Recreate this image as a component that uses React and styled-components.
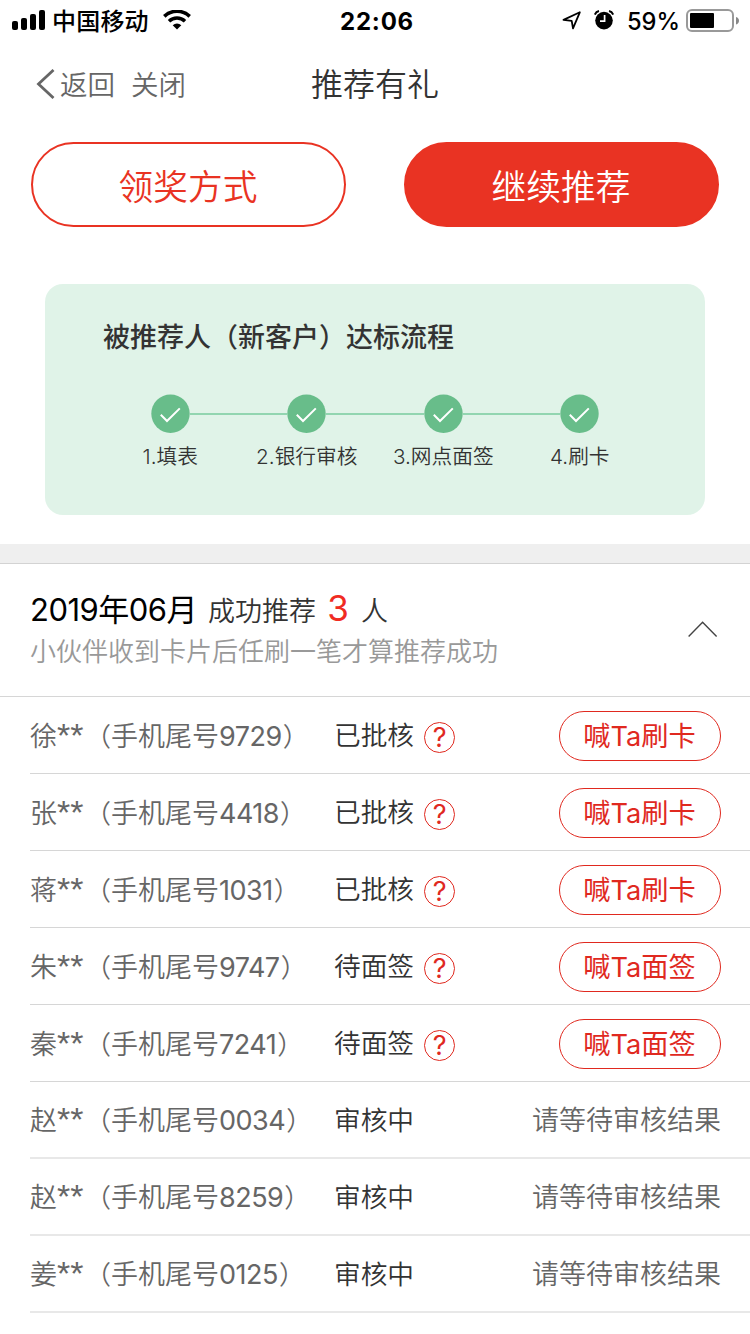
import React from "react";
import styled, { createGlobalStyle } from "styled-components";

const GlobalStyle = createGlobalStyle`
  * {
    box-sizing: border-box;
  }
  body {
    margin: 0;
    background: #fff;
    font-family: Inter, "Noto Sans CJK SC", sans-serif;
    color: #333;
  }
  button {
    font-family: inherit;
    padding: 0;
    cursor: pointer;
  }
  svg {
    display: block;
    flex: none;
  }
`;
const Page = styled.div`
  width: 750px;
  height: 1334px;
  overflow: hidden;
  background: #fff;
`;
const StatusBar = styled.div`
  height: 40px;
  display: grid;
  grid-template-columns: 1fr auto 1fr;
  align-items: center;
  padding: 0 11px 0 12px;
  color: #000;
`;
const StatusSide = styled.div`
  display: flex;
  align-items: center;
  justify-content: ${(props) => (props.$end ? "flex-end" : "flex-start")};
`;
const Carrier = styled.span`
  margin: 0 14px 0 6px;
  padding-top: 3px;
  font-size: 24px;
  line-height: 37px;
  font-weight: 500;
  letter-spacing: 0.2px;
`;
const Clock = styled.span`
  padding: 3px 0 0 3px;
  font-size: 24px;
  line-height: 37px;
  font-weight: 700;
  letter-spacing: 0.8px;
`;
const Percent = styled.span`
  margin: 0 6px 0 13px;
  padding-top: 3px;
  font-size: 23.7px;
  line-height: 37px;
  font-weight: 500;
`;
const Nav = styled.div`
  height: 88px;
  display: grid;
  grid-template-columns: 1fr auto 1fr;
  align-items: center;
  padding: 0 36px;
`;
const NavLinks = styled.div`
  display: flex;
  align-items: center;
  font-size: 27.5px;
  font-weight: 350;
  color: #666;
`;
const NavLink = styled.span`
  margin-left: ${(props) => props.$gap}px;
  padding-bottom: 2px;
`;
const Title = styled.div`
  padding-bottom: 5px;
  font-size: 32px;
  font-weight: 350;
`;
const Actions = styled.div`
  display: flex;
  justify-content: space-between;
  padding: 14px 31px 0;
`;
const ActionButton = styled.button`
  width: 315px;
  height: 85px;
  padding: 1px 1px 0 0;
  border: 2px solid #e93323;
  border-radius: 43px;
  background: ${(props) => (props.$filled ? "#e93323" : "#fff")};
  color: ${(props) => (props.$filled ? "#fff" : "#e93323")};
  font-size: 34.7px;
  font-weight: 350;
`;
const Card = styled.div`
  margin: 57px 45px 29px;
  height: 231px;
  padding: 34px 58px 0;
  border-radius: 18px;
  background: #e0f3e8;
`;
const CardTitle = styled.div`
  font-size: 27px;
  line-height: 40px;
  font-weight: 500;
  white-space: nowrap;
`;
const Steps = styled.div`
  display: flex;
  width: 546px;
  margin: 36px 0 0 -1px;
`;
const Step = styled.div`
  flex: 1;
  display: flex;
  flex-direction: column;
  align-items: center;
  font-size: 20.7px;
  line-height: 30px;
  font-weight: 350;
`;
const StepTrack = styled.div`
  width: 100%;
  display: flex;
  align-items: center;
  margin-bottom: 9px;
`;
const StepLine = styled.span`
  flex: 1;
  height: 2px;
  background: ${(props) => (props.$hidden ? "transparent" : "#92d5b0")};
`;
const Separator = styled.div`
  height: 20px;
  background: #efefef;
  border-bottom: 1px solid #d3d3d3;
`;
const MonthHeader = styled.div`
  height: 133px;
  display: flex;
  justify-content: space-between;
  padding: 23px 32px 0 30px;
  border-bottom: 1px solid #d6d6d6;
`;
const Summary = styled.div`
  height: 44px;
  display: flex;
  align-items: baseline;
  line-height: 42px;
  font-size: 27px;
  font-weight: 350;
`;
const Month = styled.span`
  width: 178px;
  color: #000;
  font-size: 31px;
  font-weight: 370;
  letter-spacing: -0.5px;
`;
const Count = styled.span`
  width: 45px;
  padding-right: 1px;
  text-align: center;
  color: #f02b22;
  font-size: 35px;
  font-weight: 400;
`;
const Hint = styled.div`
  font-size: 26px;
  line-height: 42px;
  font-weight: 350;
  color: #999;
`;
const Toggle = styled.div`
  padding-top: 34px;
`;
const Row = styled.div`
  height: 77px;
  margin-left: 30px;
  padding-right: 29px;
  display: flex;
  align-items: center;
  border-bottom: ${(props) =>
    props.$pending ? "2px solid #e8e8e8" : "1px solid #d6d6d6"};
  font-size: 27px;
  line-height: 40px;
  white-space: nowrap;
`;
const Person = styled.div`
  width: 304px;
  padding-top: ${(props) => (props.$pending ? 2 : 3)}px;
  display: flex;
  font-weight: 350;
  color: #666;
`;
const Name = styled.span`
  width: 54px;
  height: 40px;
  display: flex;
`;
const Stars = styled.span`
  margin-top: -2px;
  font-family: "Liberation Sans", sans-serif;
  font-size: 34px;
`;
const Bracket = styled.span`
  width: 27px;
  padding-left: ${(props) => (props.$close ? 1 : 0)}px;
  font-size: 26px;
  text-align: ${(props) => (props.$close ? "left" : "right")};
`;
const Digits = styled.span`
  font-weight: 370;
  letter-spacing: -0.5px;
`;
const Status = styled.span`
  font-weight: 350;
  font-size: 26.7px;
`;
const Help = styled.span`
  width: 31px;
  height: 31px;
  margin: 5px 0 0 10px;
  display: flex;
  align-items: center;
  justify-content: center;
  border: 1.5px solid #e0291f;
  border-radius: 50%;
  color: #e0291f;
  font-size: 27px;
  font-weight: 370;
  line-height: 28px;
`;
const CallButton = styled.button`
  width: 162px;
  height: 50px;
  margin: 1px 0 0 auto;
  padding: 2px 1px 0 0;
  border: 1px solid #e0291f;
  border-radius: 25px;
  background: #fff;
  color: #e0291f;
  font-size: 27.2px;
  line-height: 40px;
  font-weight: 370;
`;
const Waiting = styled.span`
  margin-left: auto;
  padding-top: 2px;
  font-weight: 350;
  color: #666;
`;

const steps = ["1.填表", "2.银行审核", "3.网点面签", "4.刷卡"];

const people = [
  { name: "徐", tail: "9729", status: "已批核", action: "喊Ta刷卡" },
  { name: "张", tail: "4418", status: "已批核", action: "喊Ta刷卡" },
  { name: "蒋", tail: "1031", status: "已批核", action: "喊Ta刷卡" },
  { name: "朱", tail: "9747", status: "待面签", action: "喊Ta面签" },
  { name: "秦", tail: "7241", status: "待面签", action: "喊Ta面签" },
  { name: "赵", tail: "0034", status: "审核中" },
  { name: "赵", tail: "8259", status: "审核中" },
  { name: "姜", tail: "0125", status: "审核中" },
];

const SignalIcon = () => (
  <svg width="34" height="20" viewBox="0 0 34 20">
    <rect x="0" y="11" width="6" height="9" rx="2" />
    <rect x="9" y="8" width="6" height="12" rx="2" />
    <rect x="18" y="4" width="6" height="16" rx="2" />
    <rect x="27" y="0" width="6" height="20" rx="2" />
  </svg>
);
const WifiIcon = () => (
  <svg width="28" height="20" viewBox="0 0 28 20" fill="none" stroke="#000">
    <path d="M1.3 6.4a18.3 18.3 0 0 1 25.4 0" strokeWidth="3.6" />
    <path d="M6 11.3a11.6 11.6 0 0 1 16 0" strokeWidth="3.5" />
    <path
      d="M9.7 15.3a6.3 6.3 0 0 1 8.6 0L14 19.6z"
      fill="#000"
      stroke="none"
    />
  </svg>
);
const LocationIcon = () => (
  <svg width="20" height="20" viewBox="0 0 20 20">
    <path
      d="M1.5 9.9L17.8 2.3L11 18.3L9.7 10.9Z"
      fill="none"
      stroke="#000"
      strokeWidth="1.8"
      strokeLinejoin="round"
    />
  </svg>
);
const AlarmIcon = () => (
  <svg
    width="20"
    height="20"
    viewBox="0 0 20 20"
    style={{ marginLeft: 12 }}
  >
    <circle cx="10" cy="10.6" r="8.8" />
    <path
      d="M.8 4.6Q2 1.6 5 1M19.2 4.6Q18 1.6 15 1"
      fill="none"
      stroke="#000"
      strokeWidth="2"
    />
    <path d="M10.6 5v6.2H6" fill="none" stroke="#fff" strokeWidth="1.7" />
  </svg>
);
const BatteryIcon = () => (
  <svg width="53" height="24" viewBox="0 0 53 24">
    <rect
      x="1"
      y="2"
      width="46"
      height="21"
      rx="5"
      fill="none"
      stroke="#999"
      strokeWidth="2"
    />
    <rect x="4" y="5" width="24" height="15" rx="1" />
    <path d="M50 9q3 1 3 3.8T50 16.5z" fill="#888" />
  </svg>
);
const BackIcon = () => (
  <svg width="19" height="30" viewBox="0 0 19 30">
    <path d="M17.5 1L2.5 15L17.5 29" fill="none" stroke="#666" strokeWidth="2.8" />
  </svg>
);
const CheckIcon = () => (
  <svg width="39" height="39" viewBox="0 0 39 39">
    <circle cx="19.5" cy="19.7" r="19.2" fill="#68bd8a" />
    <path
      d="M9.8 20.8L16 27L28.8 14.4"
      fill="none"
      stroke="#fff"
      strokeWidth="2"
    />
  </svg>
);
const ChevronIcon = () => (
  <svg width="30" height="17" viewBox="0 0 30 17">
    <path d="M.6 15.5L14.6 1.3L28.6 15.5" fill="none" stroke="#444" strokeWidth="1.4" />
  </svg>
);

const App = () => {
  return (
    <>
      <GlobalStyle />
      <Page>
        <StatusBar>
          <StatusSide>
            <SignalIcon />
            <Carrier>中国移动</Carrier>
            <WifiIcon />
          </StatusSide>
          <Clock>22:06</Clock>
          <StatusSide $end>
            <LocationIcon />
            <AlarmIcon />
            <Percent>59%</Percent>
            <BatteryIcon />
          </StatusSide>
        </StatusBar>
        <Nav>
          <NavLinks>
            <BackIcon />
            <NavLink $gap={5}>返回</NavLink>
            <NavLink $gap={16}>关闭</NavLink>
          </NavLinks>
          <Title>推荐有礼</Title>
        </Nav>
        <Actions>
          <ActionButton>领奖方式</ActionButton>
          <ActionButton $filled>继续推荐</ActionButton>
        </Actions>
        <Card>
          <CardTitle>被推荐人（新客户）达标流程</CardTitle>
          <Steps>
            {steps.map((step, i) => (
              <Step key={step}>
                <StepTrack>
                  <StepLine $hidden={i === 0} />
                  <CheckIcon />
                  <StepLine $hidden={i === steps.length - 1} />
                </StepTrack>
                {step}
              </Step>
            ))}
          </Steps>
        </Card>
        <Separator />
        <MonthHeader>
          <div>
            <Summary>
              <Month>2019年06月</Month>
              成功推荐
              <Count>3</Count>人
            </Summary>
            <Hint>小伙伴收到卡片后任刷一笔才算推荐成功</Hint>
          </div>
          <Toggle>
            <ChevronIcon />
          </Toggle>
        </MonthHeader>
        {people.map(({ name, tail, status, action }) => (
          <Row key={name + tail} $pending={!action}>
            <Person $pending={!action}>
              <Name>
                {name}
                <Stars>**</Stars>
              </Name>
              <Bracket>（</Bracket>
              手机尾号
              <Digits>{tail}</Digits>
              <Bracket $close>）</Bracket>
            </Person>
            <Status>{status}</Status>
            {action && <Help>?</Help>}
            {action ? (
              <CallButton>{action}</CallButton>
            ) : (
              <Waiting>请等待审核结果</Waiting>
            )}
          </Row>
        ))}
      </Page>
    </>
  );
};
export default App;
